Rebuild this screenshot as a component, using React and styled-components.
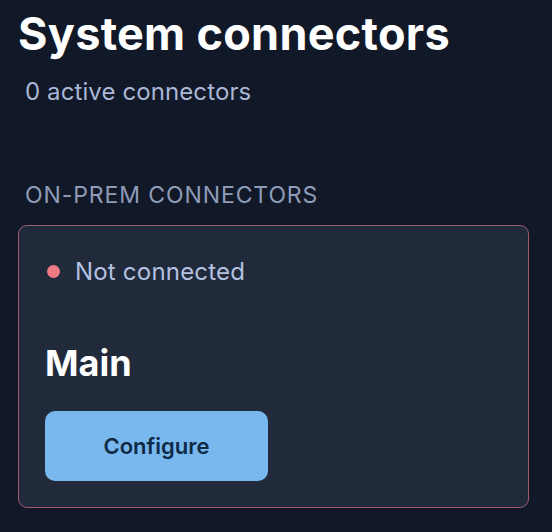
import React from 'react';
import styled, { createGlobalStyle } from 'styled-components';

const GlobalStyle = createGlobalStyle`
    html, body {
        margin: 0;
        padding: 0;
        background: #111827;
    }
    body {
        font-family: Inter, "Noto Sans", sans-serif;
        -webkit-font-smoothing: antialiased;
    }
`;

const Page = styled.div`
    min-height: 532px;
    box-sizing: border-box;
    padding: 7px 23px 0 18px;
    background: #111827;
`;

const Header = styled.header`
    display: flex;
    flex-direction: column;
`;

const Title = styled.h1`
    margin: 0;
    font-size: 45px;
    line-height: 54px;
    font-weight: 700;
    letter-spacing: 0.3px;
    color: #ffffff;
`;

const Subtitle = styled.p`
    margin: 16px 0 0 7px;
    font-size: 24px;
    line-height: 29px;
    font-weight: 400;
    letter-spacing: 0.1px;
    color: #a9b6d6;
`;

const SectionLabel = styled.h2`
    margin: 75px 0 0 7px;
    font-size: 23px;
    line-height: 28px;
    font-weight: 400;
    letter-spacing: 0.9px;
    text-transform: uppercase;
    color: #8f9bb7;
`;

const Card = styled.section`
    margin-top: 16px;
    display: flex;
    flex-direction: column;
    align-items: flex-start;
    box-sizing: border-box;
    height: 283px;
    padding: 31px 24px 0 26px;
    background: #202a3b;
    border: 1px solid #9d5b6d;
    border-radius: 9px;
`;

const Status = styled.div`
    display: flex;
    align-items: center;
    gap: 15px;
    font-size: 24px;
    line-height: 29px;
    letter-spacing: 0.2px;
    color: #b4c1e0;
`;

const Dot = styled.span`
    width: 13px;
    height: 13px;
    margin-left: 2px;
    border-radius: 50%;
    background: ${(props) => props.color};
`;

const Name = styled.h3`
    margin: 56px 0 0 0;
    font-size: 36px;
    line-height: 43px;
    font-weight: 700;
    color: #ffffff;
`;

const Button = styled.button`
    margin-top: 26px;
    width: 223px;
    height: 70px;
    border: none;
    border-radius: 10px;
    background: #78b8ee;
    color: #0e2a46;
    font-family: inherit;
    font-size: 22px;
    font-weight: 600;
    cursor: pointer;
`;

export default function App() {
    return (
        <Page>
            <GlobalStyle />
            <Header>
                <Title>System connectors</Title>
                <Subtitle>0 active connectors</Subtitle>
            </Header>
            <SectionLabel>On-prem connectors</SectionLabel>
            <Card>
                <Status>
                    <Dot color="#ee7a85" />
                    Not connected
                </Status>
                <Name>Main</Name>
                <Button>Configure</Button>
            </Card>
        </Page>
    );
}
